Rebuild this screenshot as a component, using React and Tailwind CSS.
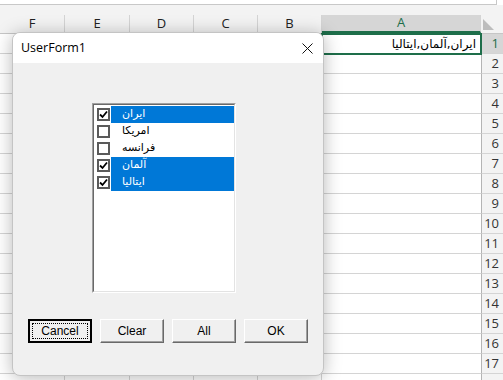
import React from "react";

const columns = [
  { label: "F", w: "w-[65px]" },
  { label: "E", w: "w-[65px]" },
  { label: "D", w: "w-[64px]" },
  { label: "C", w: "w-[64px]" },
  { label: "B", w: "w-[64px]" },
  { label: "A", w: "w-[159px]" },
];

const items = [
  { name: "ایران", checked: true },
  { name: "امریکا", checked: false },
  { name: "فرانسه", checked: false },
  { name: "آلمان", checked: true },
  { name: "ایتالیا", checked: true },
];

function CheckBox({ checked }) {
  return (
    <div className="w-[13px] h-[13px] border-2 border-[#5a5a5a] bg-white flex items-center justify-center">
      {checked && (
        <svg width="9" height="9" viewBox="0 0 9 9">
          <path d="M1 4.5 L3.5 7 L8 1.5" fill="none" stroke="#000" strokeWidth="1.8" />
        </svg>
      )}
    </div>
  );
}

function ClassicButton({ label, isDefault }) {
  if (isDefault) {
    return (
      <div className="w-[64px] h-[24px] border-2 border-black bg-[#f0f0f0] p-[2px]">
        <div className="h-full border border-dotted border-black flex items-center justify-center text-[12px] text-black">
          {label}
        </div>
      </div>
    );
  }
  return (
    <div className="w-[64px] h-[24px] border border-t-white border-l-white border-r-[#696969] border-b-[#696969] bg-[#f0f0f0] shadow-[inset_-1px_-1px_0_#a0a0a0] flex items-center justify-center text-[12px] text-black">
      {label}
    </div>
  );
}

function Sheet() {
  const rows = Array.from({ length: 18 }, (_, i) => i + 1);
  return (
    <div className="w-[503px] h-[380px] overflow-hidden bg-white">
      <div className="h-[5px] border-b border-[#c8c8c8] mr-[6px] border-r" />
      <div className="h-[10px] bg-[#f3f3f3]" />
      <div className="flex h-[19px] bg-[#f3f3f3] border-b border-[#c6c6c6]">
        {columns.map((c) => (
          <div
            key={c.label}
            className={`${c.w} border-r border-[#d4d4d4] flex items-center justify-center text-[13px] ${
              c.label === "A" ? "bg-[#d6d6d6] text-[#1e6e4a] border-b-2 border-b-[#1e6e4a]" : "text-[#222]"
            }`}
          >
            {c.label}
          </div>
        ))}
        <div className="w-[22px] relative">
          <svg className="absolute left-[2px] top-[4px]" width="11" height="11" viewBox="0 0 11 11">
            <path d="M0 0 L11 11 L0 11 Z" fill="#bdbdbd" />
          </svg>
        </div>
      </div>
      {rows.map((r) => (
        <div key={r} className="flex h-[20px]">
          {columns.map((c) => (
            <div
              key={c.label}
              className={`${c.w} border-b border-[#d4d4d4] ${c.label === "A" ? "" : "border-r"}`}
            />
          ))}
          <div
            className={`w-[22px] border-l border-b border-[#b4b4b4] border-b-[#d4d4d4] flex items-center justify-end pr-[4px] text-[13px] ${
              r === 1 ? "bg-[#d6d6d6] text-[#1e6e4a]" : "bg-[#f3f3f3] text-[#333]"
            }`}
          >
            {r < 18 ? r : ""}
          </div>
        </div>
      ))}
    </div>
  );
}

export default function App() {
  return (
    <div className="relative w-[503px] h-[380px] overflow-hidden font-['Open_Sans',sans-serif]">
      <Sheet />

      {/* selected cell A1 */}
      <div className="absolute left-[321px] top-[33px] w-[161px] h-[22px] border-2 border-[#1e6e4a] flex items-center justify-end pr-[4px] text-[12px] text-black font-['DejaVu_Sans',sans-serif]">
        <span dir="rtl">ایران,آلمان,ایتالیا</span>
      </div>

      {/* UserForm window */}
      <div className="absolute left-[12px] top-[32px] w-[312px] h-[344px] rounded-[8px] bg-[#f0f0f0] border border-[#c4c4c4] shadow-[0_2px_18px_rgba(0,0,0,0.28)] overflow-hidden flex flex-col">
        <div className="h-[30px] bg-white flex items-center justify-between pl-[8px] pr-[10px]">
          <span className="text-[12.5px] text-black">UserForm1</span>
          <svg width="11" height="11" viewBox="0 0 11 11">
            <path d="M0.5 0.5 L10.5 10.5 M10.5 0.5 L0.5 10.5" stroke="#111" strokeWidth="1" />
          </svg>
        </div>
        <div className="flex flex-col pt-[40px] pl-[15px]">
          <div className="ml-[64px] w-[144px] h-[190px] border border-t-[#a0a0a0] border-l-[#a0a0a0] border-r-white border-b-white">
            <div className="h-full border border-t-[#696969] border-l-[#696969] border-r-[#e3e3e3] border-b-[#e3e3e3] bg-white pt-[1px] font-['DejaVu_Sans',sans-serif]">
              {items.map((it) => (
                <div key={it.name} className="flex h-[17px] items-center">
                  <div className="w-[17px] flex justify-center pl-[2px]">
                    <CheckBox checked={it.checked} />
                  </div>
                  <div
                    className={`flex-1 h-full flex items-center pl-[11px] text-[11px] ${
                      it.checked ? "bg-[#0078d7] text-white" : "text-black"
                    }`}
                  >
                    <span dir="rtl">{it.name}</span>
                  </div>
                </div>
              ))}
            </div>
          </div>
          <div className="flex gap-[8px] mt-[26px] font-['Liberation_Sans',sans-serif]">
            <ClassicButton label="Cancel" isDefault />
            <ClassicButton label="Clear" />
            <ClassicButton label="All" />
            <ClassicButton label="OK" />
          </div>
        </div>
      </div>
    </div>
  );
}
